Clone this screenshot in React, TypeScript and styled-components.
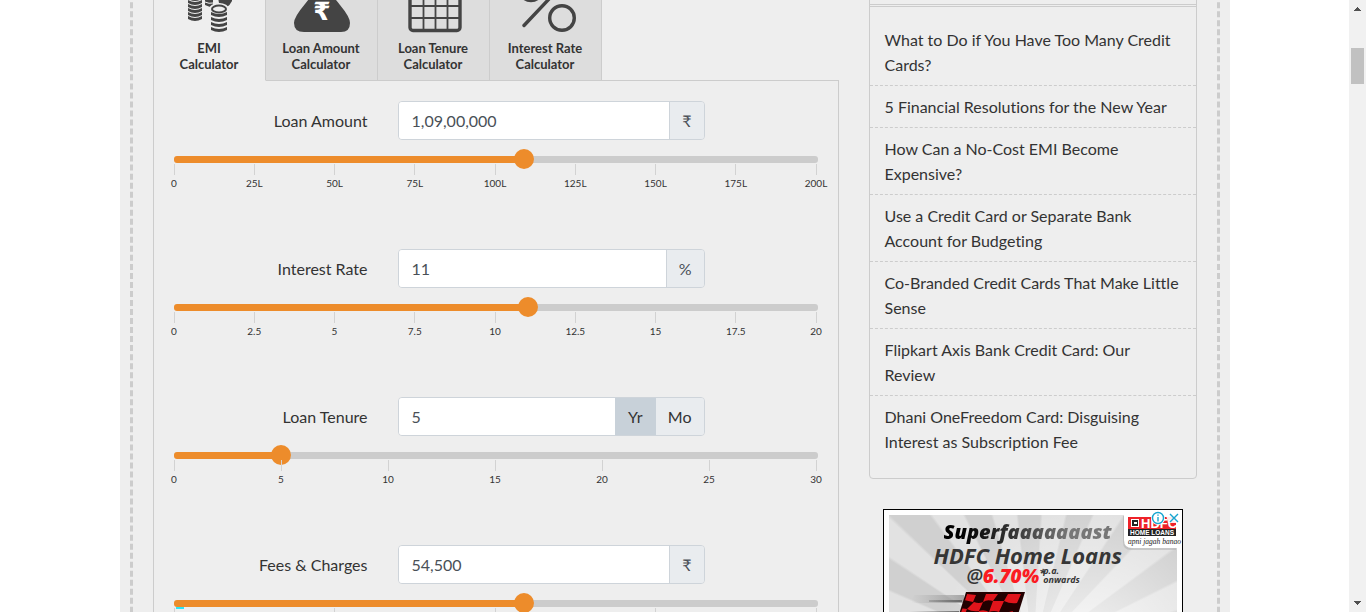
import React, { useState } from "react";
import styled, { createGlobalStyle } from "styled-components";

const GlobalStyle = createGlobalStyle`
  *, *::before, *::after { box-sizing: border-box; }
  html, body { margin: 0; background: #fff; overflow: hidden; }
  body {
    font-family: Lato, "Open Sans", "DejaVu Sans", sans-serif;
    font-size: 16px;
    font-variant-ligatures: none;
    color: #333;
  }
`;

const Screen = styled.div`
  display: flex;
  height: 100vh;
  overflow: hidden;
`;

const Viewport = styled.div`
  flex: 1;
  min-width: 0;
  overflow: hidden;
`;

/* The document is scrolled part of the way through the tab strip. */
const Page = styled.div`
  max-width: 1110px;
  margin: -52px auto 0;
  padding: 0 10px;
  background: #eee;
`;

const Coupon = styled.main`
  display: flex;
  align-items: flex-start;
  gap: 30px;
  min-height: 1080px;
  padding: 20px;
  border: 0 dashed #ccc;
  border-width: 0 3px;
`;

const Calculator = styled.section`
  flex: 1;
  min-width: 0;
`;

const Tabs = styled.nav`
  display: flex;
  border-left: 1px solid #ccc;
`;

const Tab = styled.button<{ $active?: boolean }>`
  display: flex;
  flex-direction: column;
  align-items: center;
  gap: 8px;
  width: 112px;
  height: 113px;
  padding: 8px 0;
  border: 0;
  border-right: 1px solid #ccc;
  border-bottom: 1px solid ${(p) => (p.$active ? "transparent" : "#ccc")};
  background: ${(p) => (p.$active ? "#eee" : "#ddd")};
  color: #333;
  font: bold 13px/16px Lato, sans-serif;
  cursor: pointer;
  svg { display: block; flex: none; overflow: visible; }
  span { width: 80px; }
`;

const TabFiller = styled.div`
  flex: 1;
  border-bottom: 1px solid #ccc;
`;

const Panel = styled.div`
  display: flex;
  flex-direction: column;
  gap: 57px;
  min-height: 800px;
  padding: 20px;
  border: 1px solid #ccc;
  border-top: 0;
`;

const Field = styled.div`
  height: 91px;
`;

const FieldRow = styled.div`
  display: grid;
  grid-template-columns: 194fr 307fr 83fr;
  column-gap: 30px;
  align-items: center;
  height: 39px;
`;

const FieldLabel = styled.label`
  text-align: right;
  white-space: nowrap;
  line-height: 24px;
`;

const InputGroup = styled.div`
  display: flex;
  height: 39px;
  border: 1px solid #ced4da;
  border-radius: 4px;
  overflow: hidden;
`;

const TextInput = styled.input`
  flex: 1;
  min-width: 0;
  padding: 0 13px;
  border: 0;
  background: #fff;
  color: #495057;
  font: 16px/24px Lato, sans-serif;
  outline: 0;
`;

const Unit = styled.span`
  display: flex;
  align-items: center;
  padding: 0 12px;
  border-left: 1px solid #ced4da;
  background: #e9ecef;
  color: #495057;
`;

const UnitButton = styled.button<{ $active?: boolean }>`
  min-width: 41px;
  padding: 0 12px;
  border: 0;
  background: ${(p) => (p.$active ? "#c8d1d9" : "#e9ecef")};
  color: #333;
  font: 16px/24px Lato, sans-serif;
  cursor: pointer;
`;

const Slider = styled.div`
  display: grid;
  align-items: center;
  height: 20px;
  margin-top: 9px;
`;

const Rail = styled.div<{ $fill: number }>`
  grid-area: 1 / 1;
  height: 7px;
  border-radius: 3px;
  background: linear-gradient(to right, #ed8c2b ${(p) => p.$fill}%, #ccc ${(p) => p.$fill}%);
`;

const Range = styled.input`
  grid-area: 1 / 1;
  appearance: none;
  width: calc(100% + 20px);
  height: 20px;
  margin: 0 -10px;
  background: transparent;
  outline: 0;
  &::-webkit-slider-thumb {
    appearance: none;
    width: 20px;
    height: 20px;
    border: 0;
    border-radius: 50%;
    background: #ed8c2b;
  }
`;

const Ticks = styled.div`
  display: flex;
  justify-content: space-between;
  margin: -5px 1px 0 0;
`;

const Tick = styled.span`
  display: flex;
  flex-direction: column;
  align-items: center;
  gap: 2px;
  width: 1px;
  color: #333;
  font-size: 10px;
  line-height: 12px;
  white-space: nowrap;
  &::before {
    content: "";
    width: 1px;
    height: 11px;
    background: #d2d2d2;
  }
`;

const Loading = styled.i`
  display: block;
  width: 8px;
  height: 2px;
  margin: -6px 0 4px 2px;
  background: #2ce5f6;
`;

const Side = styled.aside`
  width: 328px;
  flex: none;
`;

const Articles = styled.section`
  padding-bottom: 16px;
  border: 1px solid #ccc;
  border-radius: 4px;
`;

const ArticlesHead = styled.header`
  height: 38px;
  border-bottom: 3px double #ccc;
`;

const ArticleList = styled.ul`
  margin: 0;
  padding: 12px 0 0;
  list-style: none;
`;

const Article = styled.li`
  padding: 8px 15px;
  line-height: 25px;
  &:not(:last-child) { border-bottom: 1px dashed #ccc; }
  a { color: #333; text-decoration: none; }
`;

const Ad = styled.section`
  position: relative;
  width: 300px;
  height: 250px;
  margin: 30px 0 0 14px;
  padding: 5px;
  border: 1px solid #000;
  background: #fff;
`;

const AdArt = styled.div`
  height: 100%;
  overflow: hidden;
  padding-top: 5px;
  background:
    radial-gradient(circle at 68% 62%, rgba(255,255,255,.95) 0, rgba(255,255,255,.5) 24%, rgba(255,255,255,0) 62%),
    repeating-conic-gradient(from 4deg at 50% 58%, #e2e2e2 0 9deg, #d0d0d0 10deg 19deg, #e2e2e2 20deg);
  font-family: "Open Sans", "Noto Sans", sans-serif;
  font-style: italic;
`;

const AdHeadline = styled.p`
  width: fit-content;
  margin: 0 0 0 55px;
  background: linear-gradient(to right, #000 10%, #333 40%, #777 75%);
  background-clip: text;
  color: transparent;
  font-size: 20px;
  font-weight: 800;
  line-height: 24px;
`;

const AdBrand = styled.p`
  margin: 0 0 0 45px;
  color: #363636;
  font-size: 22px;
  font-weight: 700;
  line-height: 22px;
`;

const AdRate = styled.div`
  display: flex;
  margin: 0 0 0 78px;
  color: #363636;
  font-size: 19px;
  font-weight: 600;
  line-height: 20px;
  strong { color: #fb1b22; font-weight: 800; }
  sup { width: 4px; font-size: 11px; line-height: 14px; font-weight: 700; }
  small { font-size: 9px; font-weight: 700; line-height: 9px; }
`;

const AdPicture = styled.svg`
  display: block;
`;

const AdLogo = styled.svg`
  position: absolute;
  top: 1px;
  right: 0;
`;

const Scrollbar = styled.div`
  display: flex;
  flex-direction: column;
  align-items: center;
  justify-content: space-between;
  width: 17px;
  background: #f1f1f1;
  svg { display: block; flex: none; }
`;

const ScrollTrack = styled.div`
  flex: 1;
  padding-top: 31px;
  &::before {
    content: "";
    display: block;
    width: 13px;
    height: 36px;
    background: #c1c1c1;
  }
`;

const Band = ({ x, y, w }: { x: number; y: number; w: number }) => (
  <path d={`M${x} ${y} q${w / 2} 4 ${w} 0 v3 q${-w / 2} 4 ${-w} 0 z`} fill="#444" />
);

const CoinsIcon = () => (
  <svg width="56" height="56" viewBox="0 0 56 56" aria-hidden="true">
    {[16, 20, 24, 28, 32, 36, 40].map((y) => <Band key={y} x={7} y={y} w={14} />)}
    <path d="M24 16h8v14l-3 1-5-2z" fill="#444" />
    <path d="M24 26q4 2 8 1" stroke="#eee" fill="none" />
    <path d="M34 5h17v20q-2 4-5 6l-8-4z" fill="#444" />
    <ellipse cx="38" cy="33" rx="10" ry="6" fill="#eee" />
    <ellipse cx="38" cy="33" rx="7" ry="3.5" fill="#eee" stroke="#444" strokeWidth="2" />
    {[36, 41, 46, 51].map((y) => <Band key={y} x={30} y={y} w={16} />)}
  </svg>
);

const BagIcon = () => (
  <svg width="56" height="56" viewBox="0 0 56 56" aria-hidden="true">
    <path d="M21 4h17l-5 10h-8zM23 16h12q6 5 12 13 10 12 10 18 0 9-9 9H11q-10 0-10-9 0-6 11-19 6-8 11-12z" fill="#444" />
    <text x="29" y="44" textAnchor="middle" fill="#fff" fontFamily="Open Sans, DejaVu Sans, sans-serif" fontWeight="700" fontSize="25">₹</text>
  </svg>
);

const CalendarIcon = () => (
  <svg width="56" height="56" viewBox="0 0 56 56" fill="none" stroke="#444" aria-hidden="true">
    <rect x="5" y="6" width="50" height="48.5" rx="3" strokeWidth="3.4" />
    <path d="M5 18.500h50M5 30h50M5 42h50M18.500 18v36M30.500 18v36M42.500 18v36" strokeWidth="1.8" />
  </svg>
);

const PercentIcon = () => (
  <svg width="56" height="56" viewBox="0 0 56 56" fill="none" stroke="#444" strokeWidth="3.4" strokeLinecap="round" aria-hidden="true">
    <circle cx="14" cy="13" r="11.5" />
    <path d="M7 49.500 49 5" />
    <circle cx="45" cy="42" r="12.300" />
  </svg>
);

const tabs = [
  { name: "EMI Calculator", Icon: CoinsIcon },
  { name: "Loan Amount Calculator", Icon: BagIcon },
  { name: "Loan Tenure Calculator", Icon: CalendarIcon },
  { name: "Interest Rate Calculator", Icon: PercentIcon },
];

const articles = [
  "What to Do if You Have Too Many Credit Cards?",
  "5 Financial Resolutions for the New Year",
  "How Can a No-Cost EMI Become Expensive?",
  "Use a Credit Card or Separate Bank Account for Budgeting",
  "Co-Branded Credit Cards That Make Little Sense",
  "Flipkart Axis Bank Credit Card: Our Review",
  "Dhani OneFreedom Card: Disguising Interest as Subscription Fee",
];

type AmountFieldProps = {
  id: string;
  label: string;
  initial: number;
  max: number;
  step: number;
  ticks: string[];
  loading?: boolean;
  children: React.ReactNode;
};

function AmountField({ id, label, initial, max, step, ticks, loading, children }: AmountFieldProps) {
  const [value, setValue] = useState(initial);
  const change = (text: string) => {
    const next = Number(text.replace(/,/g, ""));
    if (!Number.isNaN(next)) setValue(Math.min(next, max));
  };
  return (
    <Field>
      <FieldRow>
        <FieldLabel htmlFor={id}>{label}</FieldLabel>
        <InputGroup>
          <TextInput id={id} value={value.toLocaleString("en-IN")} onChange={(e) => change(e.target.value)} />
          {children}
        </InputGroup>
      </FieldRow>
      <Slider>
        <Rail $fill={(value / max) * 100} />
        <Range type="range" aria-label={label} min={0} max={max} step={step} value={value} onChange={(e) => change(e.target.value)} />
      </Slider>
      {loading && <Loading />}
      <Ticks>{ticks.map((t) => <Tick key={t}>{t}</Tick>)}</Ticks>
    </Field>
  );
}

export default function App() {
  const [unit, setUnit] = useState("Yr");
  return (
    <Screen>
      <GlobalStyle />
      <Viewport>
        <Page>
          <Coupon>
            <Calculator>
              <Tabs>
                {tabs.map(({ name, Icon }, i) => (
                  <Tab key={name} type="button" $active={i === 0}>
                    <Icon />
                    <span>{name}</span>
                  </Tab>
                ))}
                <TabFiller />
              </Tabs>
              <Panel>
                <AmountField id="amount" label="Loan Amount" initial={10900000} max={20000000} step={100000}
                  ticks={["0", "25L", "50L", "75L", "100L", "125L", "150L", "175L", "200L"]}>
                  <Unit>₹</Unit>
                </AmountField>
                <AmountField id="rate" label="Interest Rate" initial={11} max={20} step={0.25}
                  ticks={["0", "2.5", "5", "7.5", "10", "12.5", "15", "17.5", "20"]}>
                  <Unit>%</Unit>
                </AmountField>
                <AmountField id="tenure" label="Loan Tenure" initial={5} max={30} step={0.5}
                  ticks={["0", "5", "10", "15", "20", "25", "30"]}>
                  {["Yr", "Mo"].map((u) => (
                    <UnitButton key={u} type="button" $active={unit === u} onClick={() => setUnit(u)}>{u}</UnitButton>
                  ))}
                </AmountField>
                <AmountField id="fees" label="Fees & Charges" initial={54500} max={100000} step={500} loading
                  ticks={["0", "25K", "50K", "75K", "1L"]}>
                  <Unit>₹</Unit>
                </AmountField>
              </Panel>
            </Calculator>
            <Side>
              <Articles>
                <ArticlesHead />
                <ArticleList>
                  {articles.map((a) => <Article key={a}><a href="#article">{a}</a></Article>)}
                </ArticleList>
              </Articles>
              <Ad aria-label="Advertisement">
                <AdArt>
                  <AdHeadline>Superfaaaaaaast</AdHeadline>
                  <AdBrand>HDFC Home Loans</AdBrand>
                  <AdRate>@<strong>6.70%</strong><sup>*</sup><small>p.a.<br />onwards</small></AdRate>
                  <AdPicture width="288" height="120" viewBox="0 0 288 120" aria-hidden="true">
                    <defs>
                      <linearGradient id="speed"><stop offset="0" stopColor="#777" stopOpacity="0" /><stop offset="1" stopColor="#666" /></linearGradient>
                      <clipPath id="flag"><path d="M78 8h56l-14 44H64z" /></clipPath>
                    </defs>
                    <path d="M25 9h50v8H22z" fill="url(#speed)" opacity=".5" />
                    <path d="M40 14h33v2H40zM20 25h50v2H20z" fill="url(#speed)" />
                    <path d="M77 6h59l-15 48H62z" fill="#200" />
                    <g clipPath="url(#flag)" fill="#e0141b">
                      <path d="M78 8l9 1-3 7-9-2zM97 8h12l-5 7q-6-2-10 1zM119 8h13l-4 9q-7 1-13-2zM85 16q5 2 9 0l-4 9q-7 1-12-2zM104 15q6 0 11 0l-5 11q-5-2-10 0zM70 22l8 1-4 10-8-1zM90 25q5-2 10 1l-4 10-11-1zM110 26q8 1 14-1l-4 11-14 1z" />
                    </g>
                  </AdPicture>
                </AdArt>
                <AdLogo width="60" height="42" viewBox="0 0 60 42" aria-hidden="true">
                  <path d="M1 5h53v34H9q-8 0-8-8z" fill="#aaa" opacity=".5" />
                  <path d="M2 0h58v37H10q-8 0-8-8z" fill="#fff" />
                  <path d="M6 6h48v12H6z" fill="#ee2229" />
                  <path d="M9 8h8v8H9z" fill="#fff" />
                  <path d="M10 9h6v6h-6z" fill="#222" />
                  <path d="M12 11h3v2h-3z" fill="#fff" />
                  <text x="19" y="17" fill="#fff" fontFamily="Liberation Sans, sans-serif" fontWeight="700" fontSize="13">HDFC</text>
                  <path d="M6 18h48v7H6z" fill="#222" />
                  <text x="8" y="24" fill="#fff" fontFamily="Liberation Sans, sans-serif" fontWeight="700" fontSize="6.500">HOME LOANS</text>
                  <text x="6" y="33" fill="#222" fontFamily="Liberation Serif, serif" fontStyle="italic" fontSize="7.500">apni jagah banao</text>
                  <circle cx="36" cy="7" r="7" fill="#fff" />
                  <path d="M43 0h17v12H46z" fill="#fff" opacity=".9" />
                  <g fill="none" stroke="#17a5d0" strokeWidth="1.400">
                    <circle cx="36" cy="7" r="5.500" />
                    <path d="M36 6v4.500M36 3.500v1.300M48 3l8 8M56 3l-8 8" />
                  </g>
                </AdLogo>
              </Ad>
            </Side>
          </Coupon>
        </Page>
      </Viewport>
      <Scrollbar aria-hidden="true">
        <svg width="17" height="17" viewBox="0 0 17 17" shapeRendering="crispEdges"><path d="M8 7h1v1h1v1h1v1h1v1H5v-1h1V9h1V8h1z" fill="#505050" /></svg>
        <ScrollTrack />
        <svg width="17" height="17" viewBox="0 0 17 17" shapeRendering="crispEdges"><path d="M5 6h7v1h-1v1h-1v1H9v1H8V9H7V8H6V7H5z" fill="#505050" /></svg>
      </Scrollbar>
    </Screen>
  );
}
